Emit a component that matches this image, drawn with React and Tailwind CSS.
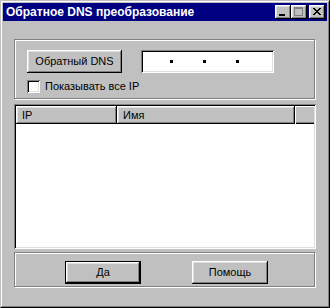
import React from "react";

const raised =
  "shadow-[inset_-1px_-1px_0_#000,inset_1px_1px_0_#fff,inset_-2px_-2px_0_#808080,inset_2px_2px_0_#dfdfdf]";
const sunken =
  "shadow-[inset_1px_1px_0_#808080,inset_-1px_-1px_0_#fff,inset_2px_2px_0_#000,inset_-2px_-2px_0_#dfdfdf]";
const etched = "border border-[#808080] shadow-[1px_1px_0_#fff,inset_1px_1px_0_#fff]";

function TitleButton({ children, className = "" }) {
  return (
    <div className={`relative w-[16px] h-[14px] bg-[#c0c0c0] ${raised} ${className}`}>{children}</div>
  );
}

export default function App() {
  return (
    <div
      className="w-[330px] h-[308px] bg-[#c0c0c0] border border-t-[#c0c0c0] border-l-[#c0c0c0] border-r-black border-b-black text-[11px] text-black"
      style={{ fontFamily: '"Liberation Sans", Arial, sans-serif' }}
    >
      <div className="h-full border border-t-white border-l-white border-r-[#808080] border-b-[#808080] p-px flex flex-col">
        {/* Title bar */}
        <div className="h-[18px] bg-[#000080] flex items-center pl-[3px] pr-[2px]">
          <span className="text-white font-bold text-[12px] leading-none flex-1">Обратное DNS преобразование</span>
          <TitleButton>
            <div className="absolute left-[4px] top-[9px] w-[6px] h-[2px] bg-black" />
          </TitleButton>
          <TitleButton>
            <div className="absolute left-[3px] top-[2px] w-[9px] h-[9px] border border-[#808080] border-t-2" />
          </TitleButton>
          <TitleButton className="ml-[2px]">
            <svg className="absolute left-[4px] top-[3px]" width="8" height="7" viewBox="0 0 8 7">
              <path d="M0 0h2v1h1v1h2v-1h1v-1h2v1h-1v1h-1v1h-1v1h1v1h1v1h1v1h-2v-1h-1v-1h-2v1h-1v1h-2v-1h1v-1h1v-1h1v-1h-1v-1h-1v-1h-1z" fill="#000" />
            </svg>
          </TitleButton>
        </div>

        {/* Group 1 */}
        <div className={`mt-[18px] ml-[11px] w-[301px] h-[60px] ${etched} pl-[12px] pt-[10px] flex flex-col`}>
          <div className="flex items-center">
            <div className={`w-[95px] h-[23px] ${raised} flex items-center justify-center`}>Обратный DNS</div>
            <div className={`ml-[19px] w-[133px] h-[23px] bg-white ${sunken} flex items-center pl-[29px] gap-[30px]`}>
              <span className="w-[3px] h-[3px] bg-black" />
              <span className="w-[3px] h-[3px] bg-black" />
              <span className="w-[3px] h-[3px] bg-black" />
            </div>
          </div>
          <div className="mt-[7px] flex items-center">
            <div className={`w-[13px] h-[13px] bg-white ${sunken}`} />
            <span className="ml-[5px] leading-none">Показывать все IP</span>
          </div>
        </div>

        {/* List view */}
        <div className={`mt-[5px] ml-[11px] w-[302px] h-[145px] bg-white ${sunken} p-[2px]`}>
          <div className="flex h-[18px] overflow-hidden">
            <div className={`w-[101px] shrink-0 bg-[#c0c0c0] ${raised} flex items-center pl-[6px]`}>IP</div>
            <div className={`w-[178px] shrink-0 bg-[#c0c0c0] ${raised} flex items-center pl-[6px]`}>Имя</div>
            <div className={`w-[19px] shrink-0 bg-[#c0c0c0] shadow-[inset_1px_1px_0_#fff,inset_0_-1px_0_#000,inset_0_-2px_0_#808080]`} />
          </div>
        </div>

        {/* Group 2 */}
        <div className={`mt-[3px] ml-[11px] w-[301px] h-[35px] ${etched} pt-[8px] pl-[50px] flex`}>
          <div className="w-[76px] h-[23px] border border-black">
            <div className={`w-full h-full ${raised} flex items-center justify-center`}>Да</div>
          </div>
          <div className={`ml-[51px] w-[76px] h-[23px] ${raised} flex items-center justify-center`}>Помощь</div>
        </div>
      </div>
    </div>
  );
}
